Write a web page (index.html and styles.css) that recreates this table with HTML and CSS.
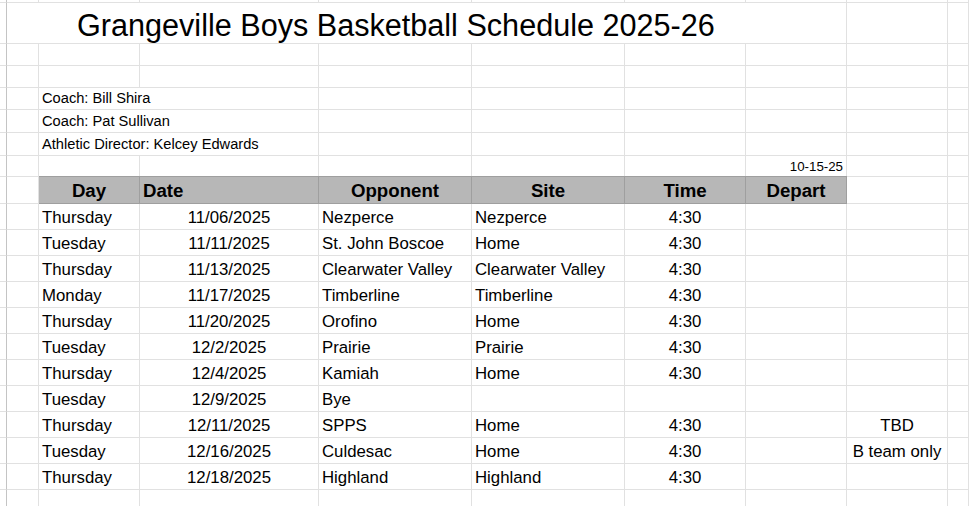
FILE: index.html
```html
<!DOCTYPE html>
<html lang="en">
<head>
<meta charset="utf-8">
<title>Grangeville Boys Basketball Schedule 2025-26</title>
<link rel="stylesheet" href="styles.css">
</head>
<body>
<div class="sheet">
  <!-- row 0 -->
  <div class="c a"></div><div class="c"></div><div class="c"></div><div class="c"></div><div class="c"></div><div class="c"></div><div class="c"></div><div class="c"></div><div class="c"></div><div class="c"></div>
  <!-- title -->
  <div class="c a"></div><div class="c title">Grangeville Boys Basketball Schedule 2025-26</div><div class="c"></div><div class="c"></div>
  <!-- empty rows -->
  <div class="c a"></div><div class="c"></div><div class="c"></div><div class="c"></div><div class="c"></div><div class="c"></div><div class="c"></div><div class="c"></div><div class="c"></div><div class="c"></div>
  <div class="c a"></div><div class="c"></div><div class="c"></div><div class="c"></div><div class="c"></div><div class="c"></div><div class="c"></div><div class="c"></div><div class="c"></div><div class="c"></div>
  <!-- staff -->
  <div class="c a"></div><div class="c"></div><div class="c staff">Coach: Bill Shira</div><div class="c"></div><div class="c"></div><div class="c"></div><div class="c"></div><div class="c"></div><div class="c"></div>
  <div class="c a"></div><div class="c"></div><div class="c staff">Coach: Pat Sullivan</div><div class="c"></div><div class="c"></div><div class="c"></div><div class="c"></div><div class="c"></div><div class="c"></div>
  <div class="c a"></div><div class="c"></div><div class="c staff">Athletic Director: Kelcey Edwards</div><div class="c"></div><div class="c"></div><div class="c"></div><div class="c"></div><div class="c"></div><div class="c"></div>
  <!-- updated -->
  <div class="c a"></div><div class="c"></div><div class="c"></div><div class="c"></div><div class="c"></div><div class="c"></div><div class="c"></div><div class="c r small">10-15-25</div><div class="c"></div><div class="c"></div>
  <!-- header -->
  <div class="c a"></div><div class="c"></div>
  <div class="c h ct">Day</div><div class="c h">Date</div><div class="c h ct">Opponent</div><div class="c h ct">Site</div><div class="c h ct">Time</div><div class="c h ct">Depart</div>
  <div class="c"></div><div class="c"></div>
  <!-- data -->
  <div class="c a"></div><div class="c"></div><div class="c">Thursday</div><div class="c ct">11/06/2025</div><div class="c">Nezperce</div><div class="c">Nezperce</div><div class="c ct">4:30</div><div class="c"></div><div class="c ct"></div><div class="c"></div>
  <div class="c a"></div><div class="c"></div><div class="c">Tuesday</div><div class="c ct">11/11/2025</div><div class="c">St. John Boscoe</div><div class="c">Home</div><div class="c ct">4:30</div><div class="c"></div><div class="c ct"></div><div class="c"></div>
  <div class="c a"></div><div class="c"></div><div class="c">Thursday</div><div class="c ct">11/13/2025</div><div class="c">Clearwater Valley</div><div class="c">Clearwater Valley</div><div class="c ct">4:30</div><div class="c"></div><div class="c ct"></div><div class="c"></div>
  <div class="c a"></div><div class="c"></div><div class="c">Monday</div><div class="c ct">11/17/2025</div><div class="c">Timberline</div><div class="c">Timberline</div><div class="c ct">4:30</div><div class="c"></div><div class="c ct"></div><div class="c"></div>
  <div class="c a"></div><div class="c"></div><div class="c">Thursday</div><div class="c ct">11/20/2025</div><div class="c">Orofino</div><div class="c">Home</div><div class="c ct">4:30</div><div class="c"></div><div class="c ct"></div><div class="c"></div>
  <div class="c a"></div><div class="c"></div><div class="c">Tuesday</div><div class="c ct">12/2/2025</div><div class="c">Prairie</div><div class="c">Prairie</div><div class="c ct">4:30</div><div class="c"></div><div class="c ct"></div><div class="c"></div>
  <div class="c a"></div><div class="c"></div><div class="c">Thursday</div><div class="c ct">12/4/2025</div><div class="c">Kamiah</div><div class="c">Home</div><div class="c ct">4:30</div><div class="c"></div><div class="c ct"></div><div class="c"></div>
  <div class="c a"></div><div class="c"></div><div class="c">Tuesday</div><div class="c ct">12/9/2025</div><div class="c">Bye</div><div class="c"></div><div class="c ct"></div><div class="c"></div><div class="c ct"></div><div class="c"></div>
  <div class="c a"></div><div class="c"></div><div class="c">Thursday</div><div class="c ct">12/11/2025</div><div class="c">SPPS</div><div class="c">Home</div><div class="c ct">4:30</div><div class="c"></div><div class="c ct">TBD</div><div class="c"></div>
  <div class="c a"></div><div class="c"></div><div class="c">Tuesday</div><div class="c ct">12/16/2025</div><div class="c">Culdesac</div><div class="c">Home</div><div class="c ct">4:30</div><div class="c"></div><div class="c ct">B team only</div><div class="c"></div>
  <div class="c a"></div><div class="c"></div><div class="c">Thursday</div><div class="c ct">12/18/2025</div><div class="c">Highland</div><div class="c">Highland</div><div class="c ct">4:30</div><div class="c"></div><div class="c ct"></div><div class="c"></div>
  <!-- trailing row -->
  <div class="c a"></div><div class="c"></div><div class="c"></div><div class="c"></div><div class="c"></div><div class="c"></div><div class="c"></div><div class="c"></div><div class="c"></div><div class="c"></div>
</div>
</body>
</html>
```
FILE: styles.css
```css
html, body {
  margin: 0;
  padding: 0;
  background: #ffffff;
}

body {
  width: 969px;
  height: 506px;
  overflow: hidden;
  font-family: "Liberation Sans", Arial, sans-serif;
  color: #000000;
}

.sheet {
  display: grid;
  grid-template-columns: 7px 32px 101px 179px 153px 153px 121px 101px 101px 1fr;
  grid-template-rows: 3px 41px 22px 22px 22px 23px 23px 21px 27px repeat(11, 26px) 40px;
  width: 969px;
  height: 506px;
  overflow: hidden;
}

.c {
  box-sizing: border-box;
  display: flex;
  align-items: flex-end;
  justify-content: flex-start;
  min-width: 0;
  padding: 0 3px 2px 3px;
  border-right: 1px solid #e1e1e1;
  border-bottom: 1px solid #e1e1e1;
  font-size: 16.8px;
  line-height: 1;
  white-space: nowrap;
}

.a {
  padding: 0;
  border-right-color: #c4c4c4;
}

.ct {
  justify-content: center;
}

.r {
  justify-content: flex-end;
}

.title {
  grid-column: span 7;
  padding-left: 70px;
  font-size: 30.6px;
  padding-bottom: 2px;
}

.staff {
  grid-column: span 2;
  font-size: 14.67px;
  padding-bottom: 3px;
}

.small {
  font-size: 13.3px;
  padding-bottom: 3px;
}

.h {
  background: #b7b7b7;
  font-weight: bold;
  font-size: 18.67px;
  border-right-color: #9f9f9f;
  border-bottom-color: #9f9f9f;
  box-shadow: 0 -1px 0 #9f9f9f;
  padding-bottom: 2px;
}
```
